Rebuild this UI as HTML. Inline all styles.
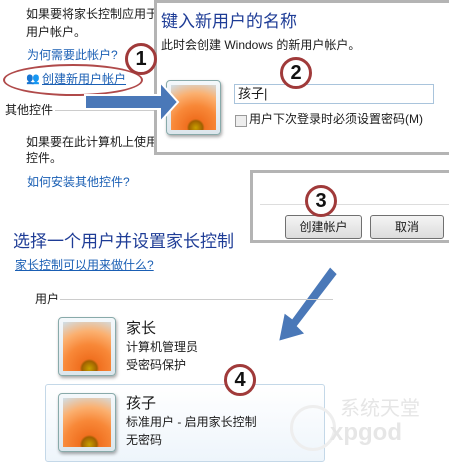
<!DOCTYPE html><html><head><meta charset="utf-8"><style>
body{margin:0;width:449px;height:468px;position:relative;overflow:hidden;background:#fff;font-family:"Liberation Sans","Noto Sans CJK SC",sans-serif;font-size:12px;color:#1a1a1a}
.a{position:absolute;white-space:nowrap;line-height:16px}
.bl{color:#1a5fb4}.u{text-decoration:underline}
.h{color:#1e3c96;font-size:17px;line-height:20px}
.box{position:absolute;border:3px solid #b4b4b4;background:#fff}
.circ{position:absolute;width:26px;height:26px;border:3px solid #a03a3a;border-radius:50%;background:#fff;font:bold 20px/26px "Liberation Sans",sans-serif;text-align:center;color:#111}
.av{position:absolute;border:1px solid #8aa;border-radius:4px;background:linear-gradient(#f4f8fb,#dce6ec);box-shadow:1px 2px 3px rgba(0,0,0,.35)}
.av i{position:absolute;left:4px;top:4px;right:4px;bottom:4px;background:radial-gradient(circle at 55% 95%,#c8a000 0,#a06000 14%,#f07020 18%,#f88838 45%,#fbb070 70%,#cfe0ea 100%)}
.btn{position:absolute;height:22px;border:1px solid #707070;border-radius:3px;background:linear-gradient(#f4f4f4,#dcdcdc);text-align:center;line-height:22px}
</style></head><body>
<div class="a" style="left:26px;top:6px">如果要将家长控制应用于</div>
<div class="a" style="left:26px;top:24px">用户帐户。</div>
<div class="a bl" style="left:27px;top:47px">为何需要此帐户?</div>
<div class="a" style="left:26px;top:71px;font-size:11px">👥</div>
<div class="a bl u" style="left:42px;top:71px">创建新用户帐户</div>
<div style="position:absolute;left:3px;top:64px;width:136px;height:28px;border:2px solid #b04a4a;border-radius:50%"></div>
<div class="a" style="left:5px;top:102px">其他控件</div>
<div style="position:absolute;left:55px;top:110px;width:100px;height:1px;background:#ccc"></div>
<div class="a" style="left:26px;top:134px">如果要在此计算机上使用</div>
<div class="a" style="left:26px;top:150px">控件。</div>
<div class="a bl" style="left:27px;top:174px">如何安装其他控件?</div>

<div class="box" style="left:154px;top:0px;width:292px;height:149px"></div>
<div class="a h" style="left:161px;top:12px">键入新用户的名称</div>
<div class="a" style="left:161px;top:37px">此时会创建 Windows 的新用户帐户。</div>
<div class="av" style="left:166px;top:80px;width:53px;height:53px"><i></i></div>
<div style="position:absolute;left:234px;top:84px;width:198px;height:18px;border:1px solid #a9c4dc;background:#fff"></div>
<div class="a" style="left:238px;top:86px;font-size:13px">孩子|</div>
<div style="position:absolute;left:235px;top:115px;width:10px;height:10px;border:1px solid #999;background:#eee"></div>
<div class="a" style="left:249px;top:111px">用户下次登录时必须设置密码(M)</div>

<svg style="position:absolute;left:0;top:0" width="449" height="468">
<polygon points="85,95 160,95 160,82 178,102 160,122 160,109 85,109" fill="#4a78b8" stroke="#fff" stroke-width="2"/>
<polygon points="330,266 338,274 298,326 306,334 278,342 284,312 292,318" fill="#4a78b8" stroke="#fff" stroke-width="2"/>
</svg>
<div class="circ" style="left:125px;top:43px">1</div>
<div class="circ" style="left:280px;top:57px">2</div>

<div class="box" style="left:250px;top:170px;width:196px;height:67px"></div>
<div style="position:absolute;left:260px;top:204px;width:189px;height:1px;background:#ddd"></div>
<div class="btn" style="left:285px;top:215px;width:75px">创建帐户</div>
<div class="btn" style="left:370px;top:215px;width:72px">取消</div>
<div class="circ" style="left:305px;top:185px">3</div>

<div class="a h" style="left:13px;top:232px">选择一个用户并设置家长控制</div>
<div class="a bl u" style="left:15px;top:257px">家长控制可以用来做什么?</div>
<div class="a" style="left:35px;top:291px">用户</div>
<div style="position:absolute;left:60px;top:299px;width:273px;height:1px;background:#ccc"></div>
<div class="av" style="left:58px;top:317px;width:56px;height:57px"><i></i></div>
<div class="a" style="left:126px;top:320px;font-size:15px;line-height:18px">家长</div>
<div class="a" style="left:126px;top:339px">计算机管理员</div>
<div class="a" style="left:126px;top:357px">受密码保护</div>
<div style="position:absolute;left:45px;top:384px;width:278px;height:76px;border:1px solid #c4d8e8;border-radius:3px;background:linear-gradient(#fff,#eef5fb)"></div>
<div class="av" style="left:58px;top:393px;width:56px;height:57px"><i></i></div>
<div class="a" style="left:126px;top:395px;font-size:15px;line-height:18px">孩子</div>
<div class="a" style="left:126px;top:414px">标准用户 - 启用家长控制</div>
<div class="a" style="left:126px;top:432px">无密码</div>
<div class="circ" style="left:224px;top:364px">4</div>
<div style="position:absolute;left:290px;top:405px;width:40px;height:40px;border-radius:50%;border:3px solid #eee"></div>
<div class="a" style="left:340px;top:398px;font-size:20px;color:#e6e6e6;line-height:22px">系统天堂</div>
<div class="a" style="left:330px;top:420px;font-size:24px;color:#e6e6e6;font-weight:bold;line-height:26px">xpgod</div>
</body></html>
